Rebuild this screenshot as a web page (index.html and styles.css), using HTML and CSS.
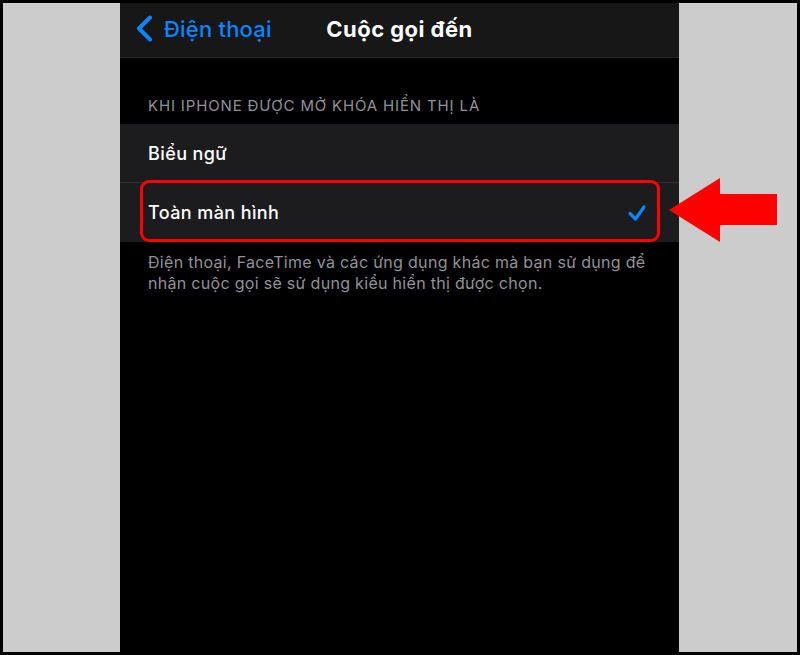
FILE: index.html
```html
<!DOCTYPE html>
<html lang="vi">
<head>
<meta charset="utf-8">
<title>Cuộc gọi đến</title>
<link rel="stylesheet" href="styles.css">
</head>
<body>
<div class="frame">
  <div class="stage">
    <div class="side"></div>
    <div class="phone">
      <header class="nav">
        <a class="back">
          <svg class="chev" width="18" height="28" viewBox="0 0 18 28"><polyline points="14,2.5 3,13.5 14,24.5" fill="none" stroke="#0a84ff" stroke-width="4" stroke-linecap="round" stroke-linejoin="round"/></svg>
          <span>Điện thoại</span>
        </a>
        <h1 class="title">Cuộc gọi đến</h1>
        <span></span>
      </header>
      <p class="group-head">KHI IPHONE ĐƯỢC MỞ KHÓA HIỂN THỊ LÀ</p>
      <ul class="list">
        <li class="row"><span>Biểu ngữ</span></li>
        <li class="row selected"><span>Toàn màn hình</span>
          <svg class="check" width="20" height="18" viewBox="0 0 20 18"><polyline points="3,9.5 8.5,15 17,3" fill="none" stroke="#0a84ff" stroke-width="3.2" stroke-linecap="round" stroke-linejoin="round"/></svg>
        </li>
      </ul>
      <p class="group-foot">Điện thoại, FaceTime và các ứng dụng khác mà bạn sử dụng để nhận cuộc gọi sẽ sử dụng kiểu hiển thị được chọn.</p>
    </div>
    <div class="side"></div>
  </div>
  <svg class="arrow" width="110" height="66" viewBox="0 0 110 66"><polygon points="0,32 51,0 51,16 108,16 108,47 51,47 51,64" fill="#ff0000"/></svg>
</div>
</body>
</html>
```
FILE: styles.css
```css
html, body {
  margin: 0;
  padding: 0;
  background: #000;
}
.frame {
  position: relative;
  width: 800px;
  height: 655px;
  box-sizing: border-box;
  padding: 3px;
  background: #000;
  font-family: "Inter", "Liberation Sans", sans-serif;
}
.stage {
  display: flex;
  height: 649px;
  background: #cccccc;
}
.side {
  flex: 1;
}
.phone {
  width: 559px;
  flex: none;
  background: #000;
}
.stage .side:first-child {
  flex: none;
  width: 117px;
}
.nav {
  display: grid;
  grid-template-columns: 1fr auto 1fr;
  align-items: center;
  height: 51px;
  padding-bottom: 3px;
  background: #171717;
  border-bottom: 1px solid #262626;
}
.back {
  display: flex;
  align-items: center;
  gap: 10px;
  padding-left: 16px;
  color: #0a84ff;
  font-size: 22px;
  font-weight: 500;
  letter-spacing: 0.2px;
}
.chev {
  display: block;
}
.title {
  margin: 0;
  color: #fff;
  font-size: 22px;
  font-weight: 700;
  letter-spacing: 0.45px;
}
.group-head {
  margin: 39px 0 9px;
  padding-left: 28px;
  color: #929297;
  font-size: 15px;
  line-height: 18px;
  letter-spacing: 0.85px;
}
.list {
  list-style: none;
  margin: 0;
  padding: 0;
  background: #1c1c1e;
}
.row {
  position: relative;
  display: flex;
  align-items: center;
  justify-content: space-between;
  height: 59px;
  padding: 0 32px 0 28px;
  color: #fff;
  font-size: 18px;
  font-weight: 500;
  letter-spacing: 0.4px;
}
.row + .row {
  height: 59px;
}
.row:first-child {
  box-shadow: inset 0 -1px 0 #323234;
}
.selected::after {
  content: "";
  position: absolute;
  left: 20px;
  right: 19px;
  top: -3px;
  bottom: 0;
  border: 3px solid #ff0000;
  border-radius: 9px;
}
.check {
  display: block;
}
.group-foot {
  margin: 10px 0 0;
  padding: 0 28px;
  color: #929297;
  font-size: 16px;
  line-height: 21px;
  letter-spacing: 0.3px;
}
.arrow {
  position: absolute;
  left: 669px;
  top: 178px;
}
```
